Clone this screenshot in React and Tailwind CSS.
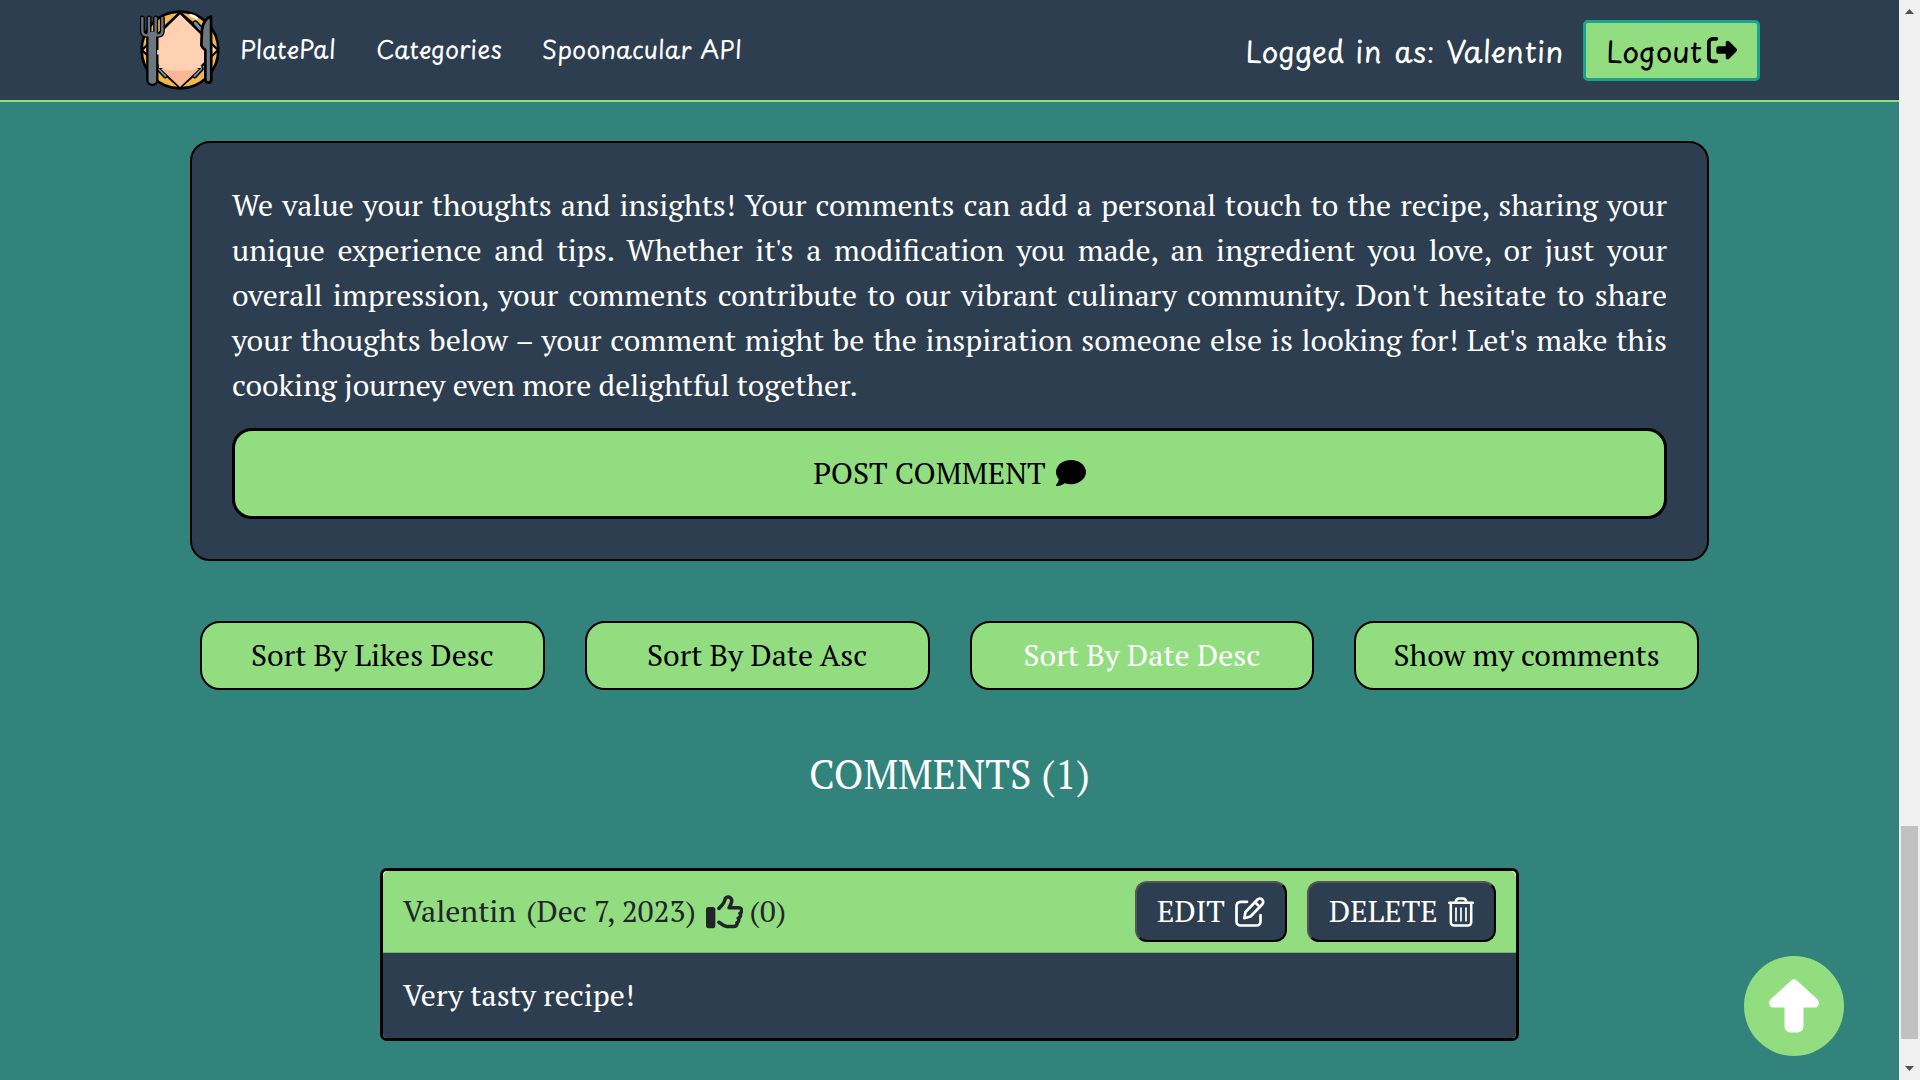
import { FaComment, FaRegThumbsUp, FaRightFromBracket } from "react-icons/fa6";

const tines = "M37 54v38q0 12 12 14h36q12-2 12-14V54M57 54v42M77 54v42";

function PlateLogo() {
  return (
    <svg viewBox="30 30 240 240" className="h-20 w-20 shrink-0" fill="none" strokeLinejoin="round" strokeLinecap="round">
      <circle cx="150" cy="150" r="115" fill="#f4b74a" stroke="#000" strokeWidth="8" />
      <path d="M182 46q10 2 18 8" stroke="#fff" strokeWidth="8" />
      <path d="M150 38 205 84M150 262l-64-56M150 262l64-56M150 38 96 88" stroke="#000" strokeWidth="7" />
      <path d="M196 70 216 92M88 206l18 20M212 206l-18 20" stroke="#000" strokeWidth="18" />
      <path d="M196 70 216 92M88 206l18 20M212 206l-18 20" stroke="#6f95a8" strokeWidth="9" />
      <path d="M150 38 264 150 150 262 36 150Z" fill="#ffd1b3" stroke="#000" strokeWidth="7" />
      <path d="M92 206q58 12 116 0l-58 55Z" fill="#f8b893" />
      <path d="M86 196q64 30 128 0v8H86Z" fill="#ffd1b3" />
      <path d="M67 112v128" stroke="#000" strokeWidth="37" />
      <path d={tines} stroke="#000" strokeWidth="15" />
      <path d="M67 106v134" stroke="#6c7780" strokeWidth="23" />
      <path d="M50 98h34l-8 12H58Z" fill="#6c7780" />
      <path d={tines} stroke="#6c7780" strokeWidth="7" />
      <path d="M84 152v10" stroke="#ffe3d2" strokeWidth="5" />
      <path
        d="M243 50q-21 4-27 38l-2 48q4 10 12 14v88q0 10 9 10t9-10Z"
        fill="#6c7780"
        stroke="#000"
        strokeWidth="8"
      />
    </svg>
  );
}

function EditIcon() {
  return (
    <svg viewBox="0 0 30 30" className="h-[30px] w-[30px]" fill="none" stroke="currentColor" strokeWidth="2.7" strokeLinecap="round" strokeLinejoin="round">
      <path d="M12 4.800H5.500a4 4 0 0 0-4 4v15.700a4 4 0 0 0 4 4h16a4 4 0 0 0 4-4V18" />
      <path d="M9.300 21.200l1.200-6.200L22.300 2.700a3.300 3.300 0 0 1 5 4.600L15.500 19.500Z" />
      <path d="M20 5.200l4.800 4.700" />
    </svg>
  );
}

function TrashIcon() {
  return (
    <svg viewBox="0 0 26 30" className="h-[30px] w-[26px]" fill="none" stroke="currentColor" strokeWidth="2.5" strokeLinecap="round" strokeLinejoin="round">
      <path d="M1.200 5.800h23.600" />
      <path d="M7.500 5.500q.6-4 3.500-4h4q2.900 0 3.500 4" />
      <path d="M2.800 6v19.200a3.300 3.300 0 0 0 3.300 3.300h13.800a3.300 3.300 0 0 0 3.300-3.300V6" />
      <path d="M8 11v12.800M13 11v12.800M18 11v12.800" strokeWidth="1.700" />
    </svg>
  );
}

function ArrowUpIcon() {
  return (
    <svg viewBox="0 0 50 54" className="h-[54px] w-[50px]" fill="#fff">
      <path d="M22.200 1.500a4 4 0 0 1 5.600 0L48.600 20.500c2.700 2.800 1.200 8-3 8H34.500V47.500a6 6 0 0 1-6 6h-7a6 6 0 0 1-6-6V28.500H4.400c-4.200 0-5.700-5.200-3-8Z" />
    </svg>
  );
}

const sorts = [
  { label: "Sort By Likes Desc" },
  { label: "Sort By Date Asc" },
  { label: "Sort By Date Desc", active: true },
  { label: "Show my comments" },
];

function Header() {
  return (
    <header className="flex h-[102px] items-center border-b-2 border-[#93dd81] bg-[#2d3e50] pr-[139px] pl-[140px] font-['Playpen_Sans',cursive] text-white">
      <PlateLogo />
      <nav className="mb-[2px] ml-5 flex gap-10 text-[25px] leading-[38px] [word-spacing:1.5px]">
        <a>PlatePal</a>
        <a>Categories</a>
        <a>Spoonacular API</a>
      </nav>
      <div className="ml-auto flex items-center gap-5 text-[30px] leading-[45px]">
        <span className="[word-spacing:2px]">Logged in as: Valentin</span>
        <button className="flex h-[61px] items-center gap-[5px] rounded-[5px] border-3 border-[#1ba390] bg-[#93dd81] px-5 text-black">
          Logout
          <FaRightFromBracket />
        </button>
      </div>
    </header>
  );
}

function Scrollbar() {
  return (
    <div className="flex w-[21px] shrink-0 flex-col items-center justify-between bg-[#f0f0f0] pt-[9px] pb-[9px]">
      <svg viewBox="0 0 9 5" className="h-[5px] w-[9px]" fill="#505050">
        <path d="M0 5 4.500 0 9 5Z" />
      </svg>
      <div className="mt-auto mb-[27px] h-[213px] w-[17px] bg-[#c1c1c1]" />
      <svg viewBox="0 0 9 5" className="h-[5px] w-[9px]" fill="#505050">
        <path d="M0 0 4.500 5 9 0Z" />
      </svg>
    </div>
  );
}

export default function App() {
  return (
    <div className="flex h-[1080px] w-[1920px] overflow-hidden bg-[#32837c] font-['PT_Serif',serif] text-[30px] leading-[45px]">
      <div className="w-[1899px]">
        <Header />
        <main className="mx-[190px] pt-[39px]">
          <section className="rounded-[20px] border-2 border-black bg-[#2d3e50] p-10 text-white">
            <p className="text-justify">
              We value your thoughts and insights! Your comments can add a personal touch to the recipe, sharing your
              unique experience and tips. Whether it's a modification you made, an ingredient you love, or just your
              overall impression, your comments contribute to our vibrant culinary community. Don't hesitate to share
              your thoughts below – your comment might be the inspiration someone else is looking for! Let's make this
              cooking journey even more delightful together.
            </p>
            <button className="mt-5 flex h-[91px] w-full items-center justify-center gap-[10px] rounded-[20px] border-3 border-black bg-[#93dd81] text-black">
              POST COMMENT
              <FaComment className="-mt-px" />
            </button>
          </section>

          <div className="mt-[60px] grid grid-cols-4 gap-10 px-[10px]">
            {sorts.map((s) => (
              <button
                key={s.label}
                className={`h-[69px] rounded-[20px] border-2 border-black bg-[#93dd81] ${s.active ? "text-white" : "text-black"}`}
              >
                {s.label}
              </button>
            ))}
          </div>

          <h2 className="mt-[60px] text-center text-[40px] leading-[48px] text-white">COMMENTS (1)</h2>

          <article className="mx-[190px] mt-[70px] rounded-[7px] border-3 border-black bg-white">
            <div className="flex h-[82px] items-center rounded-t-[6px] border-b border-[#78b469] bg-[#93dd81] px-5 text-[#212529]">
              <span className="mr-[10px]">Valentin</span>
              <span>(Dec 7, 2023)</span>
              <FaRegThumbsUp className="ml-[10px] text-[37.5px]" />
              <span className="ml-[6px]">(0)</span>
              <div className="ml-auto flex gap-5 text-white">
                <button className="flex h-[61px] w-[152px] items-center justify-between rounded-[12px] border-2 border-t-[#555] border-r-black border-b-black border-l-[#555] bg-[#2d3e50] px-5">
                  EDIT
                  <EditIcon />
                </button>
                <button className="flex h-[61px] w-[189px] items-center justify-between rounded-[12px] border-2 border-t-[#555] border-r-black border-b-black border-l-[#555] bg-[#2d3e50] px-5">
                  DELETE
                  <TrashIcon />
                </button>
              </div>
            </div>
            <p className="rounded-b-[4px] bg-[#2d3e50] p-5 text-white">Very tasty recipe!</p>
          </article>
        </main>
      </div>
      <Scrollbar />
      <button className="fixed top-[956px] left-[1744px] flex h-[100px] w-[100px] items-center justify-center rounded-full bg-[#93dd81]">
        <ArrowUpIcon />
      </button>
    </div>
  );
}
